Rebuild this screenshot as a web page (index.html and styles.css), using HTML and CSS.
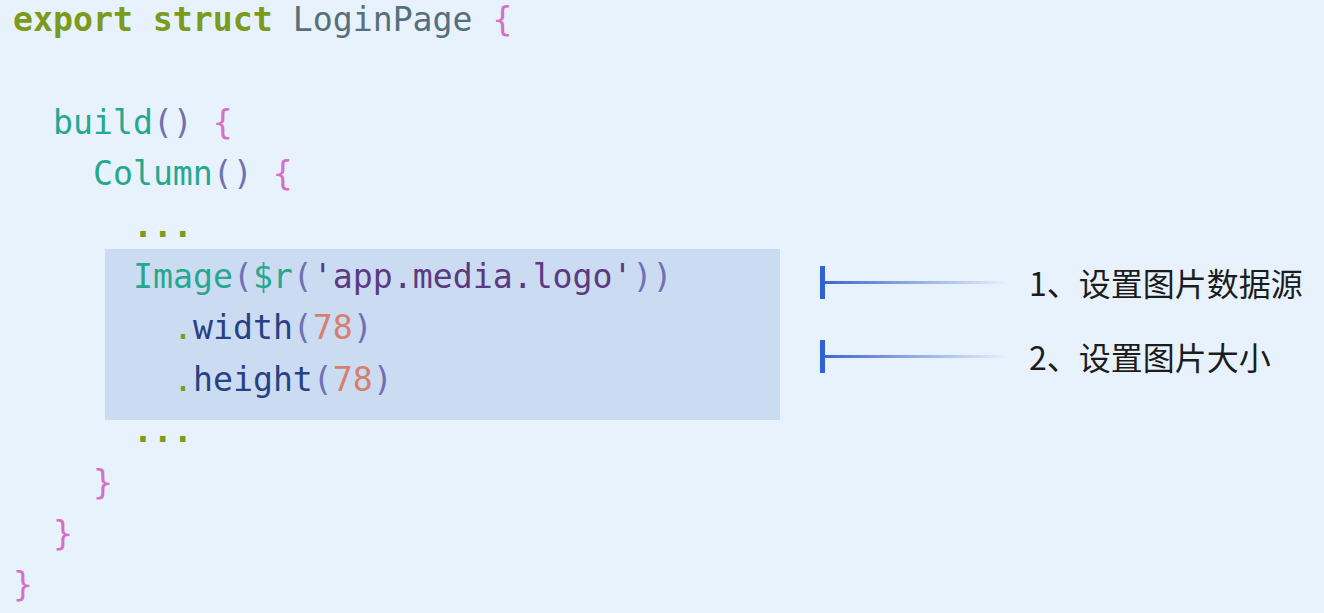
FILE: index.html
```html
<!DOCTYPE html>
<html>
<head>
    <title>LoginPage</title>
    <meta name="viewport" content="width=device-width, initial-scale=1">
    <link rel="stylesheet" href="styles.css">
</head>
<body>
    <main class="page">
        <div class="code">
            <div class="line"><span class="kw">export struct</span> <span class="type">LoginPage</span> <span class="brace">{</span></div>
            <div class="line"> </div>
            <div class="line">  <span class="fn">build</span><span class="paren">()</span> <span class="brace">{</span></div>
            <div class="line">    <span class="fn">Column</span><span class="paren">()</span> <span class="brace">{</span></div>
            <div class="line">      <span class="dots">...</span></div>
            <div class="highlight">
                <div class="line"><span class="fn">Image</span><span class="paren">(</span><span class="fn">$r</span><span class="paren">(</span><span class="str">'app.media.logo'</span><span class="paren">))</span></div>
                <div class="line">  <span class="dot">.</span><span class="method">width</span><span class="paren">(</span><span class="num">78</span><span class="paren">)</span></div>
                <div class="line">  <span class="dot">.</span><span class="method">height</span><span class="paren">(</span><span class="num">78</span><span class="paren">)</span></div>
            </div>
            <div class="line">      <span class="dots">...</span></div>
            <div class="line">    <span class="brace">}</span></div>
            <div class="line">  <span class="brace">}</span></div>
            <div class="line"><span class="brace">}</span></div>
        </div>
        <aside class="notes">
            <div class="note">
                <span class="marker"></span>
                <span class="note-text">1、设置图片数据源</span>
            </div>
            <div class="note">
                <span class="marker"></span>
                <span class="note-text">2、设置图片大小</span>
            </div>
        </aside>
    </main>
</body>
</html>
```

FILE: styles.css
```css
body {
    margin: 0;
    background-color: #E7F2FC;
    overflow: hidden;
}

.page {
    display: flex;
    align-items: flex-start;
    padding-left: 13px;
}

.code {
    width: 807px;
    margin-top: -6px;
    font-family: 'DejaVu Sans Mono', monospace;
    font-size: 33.2px;
    line-height: 51.4px;
    color: #56707A;
}

.line {
    white-space: pre;
    height: 51.4px;
}

.highlight {
    background-color: #CBDBF1;
    margin: -2px 0 -15px 92px;
    padding: 2px 0 15px 28px;
    width: 647px;
}

.kw {
    color: #7C9A1C;
    font-weight: bold;
}

.type {
    color: #56707A;
}

.brace {
    color: #D66FC6;
}

.fn {
    color: #25A88E;
}

.paren {
    color: #6E72B5;
}

.dots {
    color: #7C9A1C;
    font-weight: bold;
}

.dot {
    color: #7C9A1C;
}

.str {
    color: #5B3A80;
}

.method {
    color: #284184;
}

.num {
    color: #D5806F;
}

.notes {
    margin-top: 245px;
    display: flex;
    flex-direction: column;
}

.note {
    display: flex;
    align-items: center;
    height: 74px;
}

.marker {
    width: 199px;
    height: 33px;
    border-left: 5px solid #2F63D6;
    background: linear-gradient(to right, #3F68D0, rgba(231, 242, 252, 0) 92%) no-repeat left center / 100% 3px;
}

.note-text {
    margin-left: 5px;
    font-family: 'Noto Sans CJK SC', sans-serif;
    font-size: 32px;
    color: #1C1C1C;
}
```
